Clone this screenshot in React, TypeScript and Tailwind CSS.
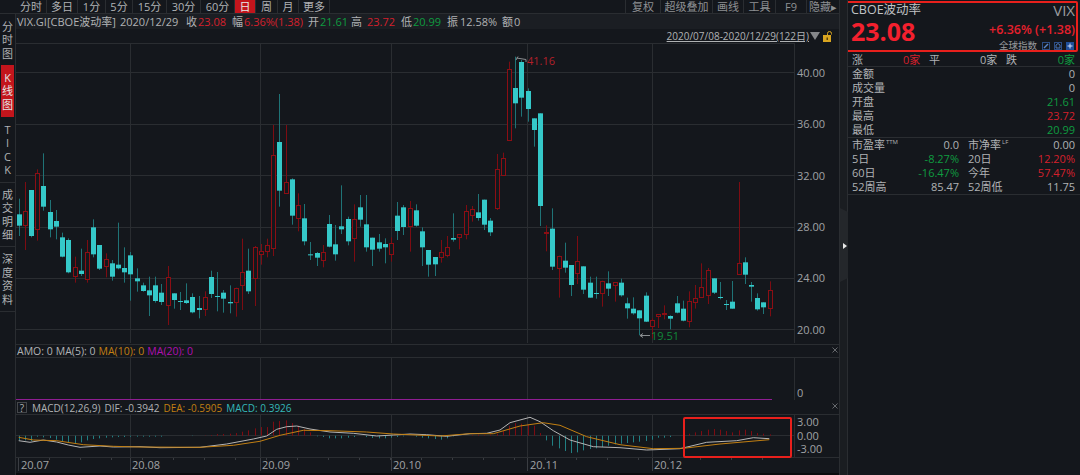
import React from "react";

// [up(red)=1, bodyTop, bodyBottom, wickTop, wickBottom] in 3x crop units, y = 150 + v / 3
const K: number[][] = [
	[0,193,227,146,258],[1,182,224,96,300],[0,120,258,120,262],[1,68,236,58,272],[0,108,170,10,182],[0,186,238,150,262],[0,213,230,180,268],[0,262,320,248,322],
	[0,270,367,265,370],[1,352,380,320,398],[0,362,372,296,378],[1,305,385,270,398],[0,232,313,208,322],[0,285,356,285,360],[1,328,350,310,382],[0,340,380,330,392],
	[0,344,355,218,358],[0,354,367,292,398],[0,316,373,306,452],[0,385,394,355,425],[0,406,423,398,425],[0,421,436,380,498],[0,406,453,380,458],[0,428,456,402,465],
	[1,382,466,348,525],[0,430,450,430,476],[0,453,456,426,480],[0,451,459,400,462],[0,441,487,430,490],[0,474,480,438,505],[1,440,476,424,498],[0,381,432,362,444],
	[0,438,441,366,484],[0,428,446,420,488],[0,456,460,406,490],[1,413,454,413,500],[1,366,406,266,480],[0,362,424,296,432],[1,292,386,288,468],[1,304,313,282,344],
	[1,286,304,266,322],[1,15,295,-75,318],[0,-24,122,-168,170],[1,96,128,-75,128],[0,88,197,85,224],[1,165,203,130,244],[0,205,274,162,286],[0,313,316,276,330],
	[0,309,323,306,348],[1,307,332,285,352],[0,222,290,195,292],[0,283,313,225,332],[0,229,238,106,252],[0,207,274,200,286],[1,208,266,163,335],[0,172,209,135,230],
	[0,223,292,135,305],[0,263,299,263,348],[0,277,296,252,305],[0,282,292,265,340],[1,280,314,262,335],[0,197,243,156,270],[0,172,231,165,255],[1,173,228,153,305],
	[0,181,227,163,230],[0,244,292,232,348],[0,300,344,300,380],[0,321,343,321,378],[1,305,319,270,338],[1,292,317,258,322],[0,264,269,190,275],[1,253,262,253,298],
	[1,184,254,165,268],[1,178,197,168,215],[0,187,204,132,212],[0,149,224,149,240],[0,212,247,204,258],[1,58,176,12,180],[1,25,75,8,78],[1,-242,-28,-265,-28],
	[0,-186,-140,-280,-65],[0,-264,-157,-270,-100],[0,-177,-123,-185,-85],[0,-95,-60,-95,-10],[0,-110,168,-110,228],[1,245,248,226,304],[0,236,350,175,360],[1,317,352,317,443],
	[0,332,353,278,368],[0,345,405,345,438],[1,332,368,258,402],[0,349,419,349,432],[0,398,443,380,443],[0,429,432,380,446],[1,392,428,392,470],[0,400,416,364,438],
	[1,397,405,397,455],[0,398,436,386,440],[0,460,475,443,506],[0,476,490,442,494],[0,481,505,481,556],[0,437,515,427,516],[1,510,529,505,565],[1,493,499,493,534],
	[1,490,493,466,508],[0,498,506,496,538],[0,460,488,438,490],[0,476,512,452,514],[1,452,512,424,532],[1,443,456,405,476],[1,412,442,340,443],[1,359,433,354,462],
	[0,385,428,385,432],[0,441,444,396,448],[0,462,465,450,480],[0,455,476,393,476],[1,340,373,96,374],[0,337,374,322,402],[0,405,410,396,455],[0,444,478,430,482],
	[0,457,472,457,492],[1,421,475,394,499],
];

const HIST = [
	-14,-14,-16,-3,-5,-7,-12,-16,-20,-22,-20,-14,-10,-8,-6,-5,-4,-4,-3,-3,-3,-3,-3,-3,0,0,0,0,-1,0,1,2,5,5,6,8,12,16,22,26,26,42,44,46,38,30,20,10,-2,-4,-8,-8,-8,-6,-4,0,-4,-7,-8,-8,-6,-4,-2,0,-3,-6,-8,-10,-12,-8,-2,0,0,2,3,2,3,6,14,30,38,36,34,30,8,-14,-30,-38,-46,-52,-50,-44,-40,-38,-34,-30,-26,-24,-22,-20,-18,-16,-12,-6,-6,-4,0,0,6,10,14,18,20,18,14,10,16,18,14,8,6,4,
];

const DIF = [[56,302],[90,307],[130,300],[170,306],[205,315],[240,322],[300,318],[340,321],[420,320],[480,323],[600,322],[680,312],[760,297],[800,288],[830,268],[860,260],[890,258],[930,267],[990,276],[1060,280],[1130,288],[1180,285],[1230,282],[1280,284],[1340,289],[1410,281],[1460,280],[1500,270],[1530,248],[1590,232],[1620,245],[1660,272],[1710,300],[1780,320],[1860,323],[1940,330],[2040,326],[2120,307],[2210,302],[2260,293],[2308,296]];
const DEA = [[56,292],[100,300],[170,302],[250,314],[340,319],[420,321],[600,322],[700,316],[780,304],[840,286],[910,271],[990,272],[1100,276],[1180,282],[1320,288],[1410,281],[1480,281],[1560,258],[1630,248],[1680,256],[1760,290],[1860,314],[1960,326],[2050,325],[2160,312],[2308,299]];

const GRID = "#2a2d31";
const VLINES = [130.5, 260.5, 391.5, 527.5, 652.5];
const cx = (i: number) => Math.round((56 + 18.62 * i) / 3) + 0.5;
const pts = (list: number[][]) => list.map(([x, y]) => `${(x / 3).toFixed(1)},${(340 + y / 3).toFixed(1)}`).join(" ");

const TABS = [
	{ t: "分时", w: "w-[31px]" },
	{ t: "多日", w: "w-[31px]" },
	{ t: "1分", w: "w-[28px]" },
	{ t: "5分", w: "w-[27px]" },
	{ t: "15分", w: "w-[34px]" },
	{ t: "30分", w: "w-[34px]" },
	{ t: "60分", w: "w-[34px]" },
	{ t: "日", w: "w-[21px] bg-[#c3151c] text-[#e8e8e8]" },
	{ t: "周", w: "w-[22px]" },
	{ t: "月", w: "w-[21px]" },
	{ t: "更多", w: "w-[31px]" },
];
const TOOLS = [
	{ t: "复权", w: "w-[35px]" },
	{ t: "超级叠加", w: "w-[52px]" },
	{ t: "画线", w: "w-[31px]" },
	{ t: "工具", w: "w-[32px]" },
	{ t: "F9", w: "w-[31px]" },
	{ t: "隐藏▸", w: "w-[33px]" },
];
const RAIL = [
	{ c: "分时图", h: "h-[49px] justify-end pb-[3px]" },
	{ c: "K线图", h: "h-[52px] justify-center mt-[2px] mx-[1px] bg-[#c3151c] text-[#e4e4e4]" },
	{ c: "TICK", h: "h-[65px] justify-center" },
	{ c: "成交明细", h: "h-[65px] justify-center border-y border-[#2a2d31]" },
	{ c: "深度资料", h: "h-[65px] justify-center border-b border-[#2a2d31]" },
];

const RED = "text-[#d4202c]";
const GREEN = "text-[#0f9b40]";

function Candles() {
	return (
		<svg width="823" height="300" viewBox="16 43 823 300" className="block shrink-0">
			<line x1="16" x2="794" y1="43.5" y2="43.5" stroke={GRID} />
			{[72.5, 124.5, 175.5, 227.5, 278.5, 329.5].map((y) => (
				<line key={y} x1="16" x2="794" y1={y} y2={y} stroke={GRID} />
			))}
			{VLINES.map((x) => (
				<line key={x} x1={x} x2={x} y1="43" y2="343" stroke={GRID} />
			))}
			<line x1="794.5" x2="794.5" y1="43" y2="343" stroke={GRID} strokeWidth="1" />
			{K.map(([up, top, bottom, wTop, wBottom], i) => {
				const x = cx(i);
				const y = (v: number) => 150 + v / 3;
				return (
					<g key={i}>
						<line x1={x} x2={x} y1={y(wTop)} y2={y(wBottom)} stroke={up ? "#7d0c12" : "#1f7376"} />
						{up ? (
							<rect x={x - 2} width="4" y={Math.round(y(top)) + 0.5} height={Math.max(0.5, Math.round(y(bottom) - y(top)))} fill="#14171c" stroke="#8c0e14" />
						) : (
							<rect x={x - 2.5} width="5" y={y(top)} height={Math.max(1, y(bottom) - y(top))} fill="#35c9c9" />
						)}
					</g>
				);
			})}
			<path d="M516 60 L518 56.5 M516.5 58 L526 59.5 L526 62" fill="none" stroke="#8a8d90" />
			<text x="527" y="65" fontSize="11" fill="#b3202a">41.16</text>
			<path d="M640 335.5 H650 M640 335.5 L643 333.5 M640 335.5 L643 337.5" fill="none" stroke="#8a8d90" />
			<text x="651" y="340" fontSize="11" fill="#12873a">19.51</text>
			{[
				["40.00", 77],
				["36.00", 128],
				["32.00", 180],
				["28.00", 231],
				["24.00", 282],
				["20.00", 334],
			].map(([t, y]) => (
				<text key={t} x="797" y={y} fontSize="11" fill="#a0a2a5">{t}</text>
			))}
		</svg>
	);
}

function AmoPlot() {
	return (
		<svg width="823" height="42" viewBox="16 358 823 42" className="block shrink-0">
			{VLINES.map((x) => (
				<line key={x} x1={x} x2={x} y1="358" y2="400" stroke={GRID} />
			))}
			<line x1="794.5" x2="794.5" y1="358" y2="400" stroke={GRID} />
			<line x1="16" x2="772" y1="399.5" y2="399.5" stroke="#8f1d92" />
			<text x="797" y="397" fontSize="11" fill="#a0a2a5">0</text>
		</svg>
	);
}

function MacdPlot() {
	return (
		<div className="relative shrink-0">
			<svg width="823" height="42" viewBox="16 415 823 42" className="block">
				{VLINES.map((x) => (
					<line key={x} x1={x} x2={x} y1="415" y2="457" stroke={GRID} />
				))}
				<line x1="794.5" x2="794.5" y1="415" y2="457" stroke={GRID} />
				<line x1="16" x2="794" y1="435.5" y2="435.5" stroke={GRID} />
				{HIST.map((v, i) =>
					v === 0 ? null : (
						<line key={i} x1={cx(i)} x2={cx(i)} y1="435.7" y2={435.7 - v / 3} stroke={v > 0 ? "#7d0c12" : "#217f82"} />
					),
				)}
				<polyline points={pts(DIF)} fill="none" stroke="#b4b4b4" strokeWidth="1" />
				<polyline points={pts(DEA)} fill="none" stroke="#c27f12" strokeWidth="1" />
				{[
					["3.00", 426],
					["0.00", 440],
					["-3.00", 453],
				].map(([t, y]) => (
					<text key={t} x="797" y={y} fontSize="11" fill="#a0a2a5">{t}</text>
				))}
			</svg>
			{/* highlight box drawn over the last few weeks */}
			<div className="absolute left-[667px] top-[2px] h-[41px] w-[109px] rounded-[2px] border-2 border-[#e8201c]" />
		</div>
	);
}

function DateAxis() {
	const ticks = Array.from({ length: 25 }, (_, i) => 18.5 + i * 31);
	return (
		<svg width="823" height="16" viewBox="16 457 823 16" className="block shrink-0">
			{ticks.map((x) => (
				<line key={x} x1={x} x2={x} y1="457" y2="459" stroke="#3a3d42" />
			))}
			{[18.5, 130.5, 260.5, 391.5, 527.5, 652.5].map((x) => (
				<line key={x} x1={x} x2={x} y1="457" y2="470" stroke="#3a3d42" />
			))}
			{[
				["20.07", 21],
				["20.08", 132],
				["20.09", 262],
				["20.10", 393],
				["20.11", 530],
				["20.12", 654],
			].map(([t, x]) => (
				<text key={t} x={x} y="468" fontSize="11" fill="#a0a2a5">{t}</text>
			))}
		</svg>
	);
}

function Close() {
	return (
		<svg width="6" height="6" viewBox="0 0 6 6" className="absolute right-[1px] top-[2px]">
			<path d="M0.5 0.5 L5.5 5.5 M5.5 0.5 L0.5 5.5" stroke="#66696d" />
		</svg>
	);
}

function Row({ label, sup, value, color = "text-[#b0b2b4]" }: { label: string; sup?: string; value: string; color?: string }) {
	return (
		<div className="flex h-[14px] items-center justify-between">
			<span className="flex">
				{label}
				{sup && <span className="ml-[1px] text-[6px] leading-[9px]">{sup}</span>}
			</span>
			<span className={color}>{value}</span>
		</div>
	);
}

export default function App() {
	return (
		<div className="flex h-[475px] w-[1080px] overflow-hidden bg-[#14171c] font-['Open_Sans','Noto_Sans_CJK_SC',sans-serif] text-[11px] leading-[14px] text-[#b0b2b4]">
			<div className="flex w-[839px] shrink-0 flex-col">
				<div className="flex h-[14px] shrink-0 border-b border-[#2a2d31] pl-[16px]">
					{TABS.map(({ t, w }) => (
						<div key={t} className={`flex items-center justify-center border-r border-[#2a2d31] ${w}`}>
							{t}
						</div>
					))}
					<div className="ml-auto flex">
						{TOOLS.map(({ t, w }) => (
							<div key={t} className={`flex items-center justify-center border-l border-[#2a2d31] text-[#8e9093] ${w}`}>
								{t}
							</div>
						))}
					</div>
				</div>

				<div className="flex min-h-0 flex-1">
					<div className="flex w-[16px] shrink-0 flex-col border-r border-[#2a2d31]">
						{RAIL.map(({ c, h }) => (
							<div key={c} className={`flex flex-col items-center text-[11px] leading-[13.5px] ${h}`}>
								{c.split("").map((ch) => (
									<span key={ch}>{ch}</span>
								))}
							</div>
						))}
					</div>

					<div className="flex min-w-0 flex-1 flex-col">
						<div className="flex h-[15px] shrink-0 items-center whitespace-nowrap bg-[#1b1e23] pl-[1px]">
							<span className="w-[103px]">VIX.GI[CBOE波动率]</span>
							<span className="w-[66px]">2020/12/29</span>
							<span className="w-[12px]">收</span>
							<span className={`w-[34px] ${RED}`}>23.08</span>
							<span className="w-[12px]">幅</span>
							<span className={`w-[64px] ${RED}`}>6.36%(1.38)</span>
							<span className="w-[12px]">开</span>
							<span className={`w-[31px] ${GREEN}`}>21.61</span>
							<span className="w-[16px]">高</span>
							<span className={`w-[34px] ${RED}`}>23.72</span>
							<span className="w-[12px]">低</span>
							<span className={`w-[34px] ${GREEN}`}>20.99</span>
							<span className="w-[13px]">振</span>
							<span className="w-[42px]">12.58%</span>
							<span className="w-[12px]">额</span>
							<span>0</span>
						</div>

						<div className="flex h-[14px] shrink-0 items-center justify-end pr-[6px] text-[10px]">
							<span className="underline">2020/07/08-2020/12/29(122日)</span>
							<svg width="10" height="8" viewBox="0 0 10 8" className="ml-[1px]">
								<polygon points="0,0 10,0 5,8" fill="#85878a" />
							</svg>
							<svg width="10" height="11" viewBox="0 0 10 11" className="ml-[3px]">
								<rect x="0" y="4" width="8" height="7" fill="#d9a520" />
								<path d="M4.5 4 V2.5 a2 2 0 0 1 4 0 V3.5" fill="none" stroke="#d9a520" />
								<rect x="3.5" y="6.5" width="1.5" height="2.5" fill="#5a4208" />
							</svg>
						</div>

						<Candles />

						<div className="relative mt-[1px] flex h-[14px] shrink-0 items-center gap-[3px] border-y border-[#2a2d31] pl-[1px] text-[10.5px]">
							<span>AMO: 0</span>
							<span>MA(5): 0</span>
							<span className="text-[#c27f12]">MA(10): 0</span>
							<span className="text-[#b010b0]">MA(20): 0</span>
							<Close />
						</div>
						<AmoPlot />
						<div className="relative mt-[1px] flex h-[14px] shrink-0 items-center gap-[4px] border-b border-[#2a2d31] pl-[1px] text-[10px]">
							<span className="flex h-[11px] w-[10px] items-center justify-center border border-[#44474b] text-[10px]">?</span>
							<span className="ml-[1px]">MACD(12,26,9)</span>
							<span>DIF: -0.3942</span>
							<span className="text-[#c27f12]">DEA: -0.5905</span>
							<span className="text-[#35b8b8]">MACD: 0.3926</span>
							<Close />
						</div>
						<MacdPlot />
						<div className="h-[16px] shrink-0 border-t border-[#2a2d31]">
							<DateAxis />
						</div>
						<div className="flex-1 bg-[#0a0b0d]" />
					</div>
				</div>
			</div>

			<div className="relative w-[9px] shrink-0 border-x border-[#2a2d31] bg-[#1a1d21]">
				<svg width="8" height="74" viewBox="0 0 8 74" className="absolute left-0 top-[208px]">
					<polygon points="0,0 8,4 8,70 0,74" fill="#24272b" />
					<polygon points="3,35 7,38 3,41" fill="#e8e8e8" />
				</svg>
			</div>

			<div className="flex w-[232px] shrink-0 flex-col">
				<div className="ml-[-3px] mr-[2px] mt-[1px] h-[51px] rounded-[2px] border-2 border-[#e8201c] pl-[4px] pr-[1px]">
					<div className="flex h-[17px] items-center justify-between pb-[3px] text-[12.5px]">
						<span className="text-[#c0c2c4]">CBOE波动率</span>
						<span className="text-[15px] text-[#9a9c9f]">VIX</span>
					</div>
					<div className="flex h-[23px] items-center justify-between">
						<span className="text-[25px] font-bold leading-[23px] text-[#f4202e]">23.08</span>
						<span className="mb-[4px] text-[12.5px] font-semibold text-[#e5202c]">+6.36% (+1.38)</span>
					</div>
					<div className="mt-[-2px] flex h-[10px] items-center justify-end gap-[4px] text-[9.5px] text-[#9a9c9f]">
						<span className="mr-[1px]">全球指数</span>
						<svg width="8" height="8" viewBox="0 0 8 8"><rect x="0.5" y="0.5" width="7" height="7" fill="none" stroke="#2c4e86" /><path d="M2 6 L6 2" stroke="#5a86c8" strokeWidth="1.5" /></svg>
						<svg width="8" height="8" viewBox="0 0 8 8"><rect x="0.5" y="0.5" width="7" height="7" fill="none" stroke="#2c4e86" /><path d="M2 6 V3 L4 1.5 L6 3 V6 Z" fill="none" stroke="#4a76b8" /></svg>
						<svg width="8" height="8" viewBox="0 0 8 8" className="mr-[1px]"><rect width="8" height="8" fill="#1f4f9a" /><path d="M4 1.5 V6.5 M1.5 4 H6.5" stroke="#cfe0ff" /></svg>
					</div>
				</div>

				<div className="mt-[1px] flex h-[14px] items-center whitespace-nowrap border-b border-[#2a2d31] pl-[4px] pr-[5px]">
					<span className="w-[51px]">涨</span>
					<span className={`w-[26px] ${RED}`}>0家</span>
					<span className="w-[51px]">平</span>
					<span className="w-[26px]">0家</span>
					<span className="flex-1">跌</span>
					<span className={GREEN}>0家</span>
				</div>
				<div className="border-b border-[#2a2d31] pl-[4px] pr-[5px]">
					<Row label="金额" value="0" />
					<Row label="成交量" value="0" />
					<Row label="开盘" value="21.61" color={GREEN} />
					<Row label="最高" value="23.72" color={RED} />
					<Row label="最低" value="20.99" color={GREEN} />
				</div>
				<div className="grid grid-cols-2 gap-x-[9px] border-b border-[#2a2d31] pl-[4px] pr-[5px]">
					<Row label="市盈率" sup="TTM" value="0.0" />
					<Row label="市净率" sup="LF" value="0.00" />
					<Row label="5日" value="-8.27%" color={GREEN} />
					<Row label="20日" value="12.20%" color={RED} />
					<Row label="60日" value="-16.47%" color={GREEN} />
					<Row label="今年" value="57.47%" color={RED} />
					<Row label="52周高" value="85.47" />
					<Row label="52周低" value="11.75" />
				</div>
			</div>
		</div>
	);
}
